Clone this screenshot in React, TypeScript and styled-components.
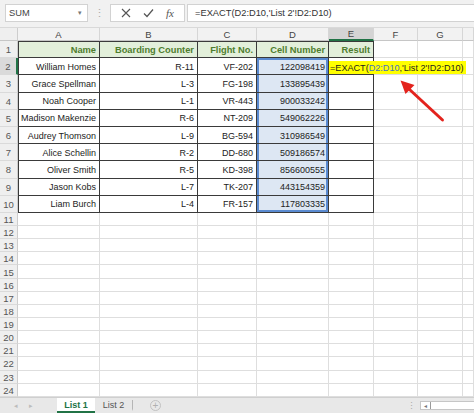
import React from "react";
import styled, { createGlobalStyle } from "styled-components";

const GlobalStyle = createGlobalStyle`
  * { box-sizing: border-box; }
  html, body { margin: 0; padding: 0; background: #fff; }
  body { font-family: "Liberation Sans", Arial, sans-serif; }
`;

// data
const COLS = ["A", "B", "C", "D", "E", "F", "G", "H"];
const HEADERS = ["Name", "Boarding Counter", "Flight No.", "Cell Number", "Result"];
const ROWS = [
  ["William Homes", "R-11", "VF-202", "122098419"],
  ["Grace Spellman", "L-3", "FG-198", "133895439"],
  ["Noah Cooper", "L-1", "VR-443", "900033242"],
  ["Madison Makenzie", "R-6", "NT-209", "549062226"],
  ["Audrey Thomson", "L-9", "BG-594", "310986549"],
  ["Alice Schellin", "R-2", "DD-680", "509186574"],
  ["Oliver Smith", "R-5", "KD-398", "856600555"],
  ["Jason Kobs", "L-7", "TK-207", "443154359"],
  ["Liam Burch", "L-4", "FR-157", "117803335"],
];
const TOTAL_ROWS = 24;

type CellProps = {
  $table?: boolean;
  $head?: boolean;
  $range?: boolean;
  $left?: boolean;
  $top?: boolean;
  $rTop?: boolean;
  $rBottom?: boolean;
};

const DARK = "#3a3a3a";
const BLUE = "#5a8ad0";

const cellShadow = (p: CellProps) => {
  const list: string[] = [];
  if (p.$left) list.push(`inset 1px 0 0 ${DARK}`);
  if (p.$top) list.push(`inset 0 1px 0 ${DARK}`);
  if (p.$range) {
    list.push(`inset 2px 0 0 ${BLUE}`, `inset -2px 0 0 ${BLUE}`);
    if (p.$rTop) list.push(`inset 0 2px 0 ${BLUE}`);
    if (p.$rBottom) list.push(`inset 0 -2px 0 ${BLUE}`);
  }
  return list.length ? list.join(", ") : "none";
};

const App: React.FC = () => {
  const cells: React.ReactNode[] = [];

  cells.push(<Corner key="corner" />);
  COLS.forEach((c) => (
    cells.push(<ColHead key={`h-${c}`} $active={c === "E"}>{c === "H" ? "" : c}</ColHead>)
  ));

  for (let r = 1; r <= TOTAL_ROWS; r++) {
    cells.push(<RowHead key={`r-${r}`} $active={r === 2}>{r}</RowHead>);
    COLS.forEach((c, ci) => {
      const inTable = r <= 10 && ci <= 4;
      const isRange = c === "D" && r >= 2 && r <= 10;
      let content: React.ReactNode = null;
      if (r === 1 && ci <= 4) content = HEADERS[ci];
      if (r >= 2 && r <= 10 && ci <= 3) content = ROWS[r - 2][ci];
      if (r === 2 && c === "E") {
        content = (
          <EditText>
            =EXACT(<RefText>D2:D10</RefText>,'List 2'!D2:D10)
          </EditText>
        );
      }
      cells.push(
        <Cell
          key={`${c}${r}`}
          $table={inTable}
          $head={inTable && r === 1}
          $range={isRange}
          $rTop={r === 2}
          $rBottom={r === 10}
          $left={inTable && ci === 0}
          $top={inTable && r === 1}
        >
          {content}
        </Cell>
      );
    });
  }

  return (
    <>
      <GlobalStyle />
      <Page>
        <FormulaBar>
          <NameBox>
            SUM
            <Caret>▾</Caret>
          </NameBox>
          <Grip>⋮</Grip>
          <ActionBox>
            <svg width="10" height="10" viewBox="0 0 10 10">
              <path d="M1 1 L9 9 M9 1 L1 9" stroke="#555" strokeWidth="1.1" fill="none" />
            </svg>
            <svg width="11" height="10" viewBox="0 0 11 10">
              <path d="M1 5.5 L4 8.5 L10 1.5" stroke="#555" strokeWidth="1.2" fill="none" />
            </svg>
            <Fx>fx</Fx>
          </ActionBox>
          <FormulaInput>=EXACT(D2:D10,'List 2'!D2:D10)</FormulaInput>
        </FormulaBar>

        <Sheet>
          {cells}
          <Arrow width="52" height="48" viewBox="0 0 52 48">
            <line x1="47.5" y1="44" x2="14" y2="13" stroke="#e3231d" strokeWidth="3" strokeLinecap="round" />
            <polygon points="5.5,4.5 19.5,9 10.5,18" fill="#e3231d" />
          </Arrow>
        </Sheet>

        <TabBar>
          <TabNav>
            <span>◂</span>
            <span>▸</span>
          </TabNav>
          <Tab $active>List 1</Tab>
          <Tab>List 2</Tab>
          <AddSheet>+</AddSheet>
          <Spacer />
          <Grip $small>⋮</Grip>
          <ScrollBox>
            <ScrollBtn>◂</ScrollBtn>
          </ScrollBox>
        </TabBar>
      </Page>
    </>
  );
};

export default App;

const Page = styled.div`
  width: 474px;
  height: 413px;
  display: flex;
  flex-direction: column;
  overflow: hidden;
  background: #fff;
`;

// formula bar
const FormulaBar = styled.div`
  height: 28px;
  flex: none;
  display: flex;
  align-items: center;
  padding: 1px 0 2px 5px;
  background: #f1f1f1;
  border-bottom: 1px solid #d9d9d9;
  font-size: 9.3px;
  color: #333;
`;

const NameBox = styled.div`
  width: 83px;
  height: 18px;
  display: flex;
  align-items: center;
  justify-content: space-between;
  padding: 0 5px 0 3px;
  background: #fff;
  border: 1px solid #d2d2d2;
  color: #444;
`;

const Caret = styled.span`
  font-size: 7px;
  color: #777;
`;

const Grip = styled.div<{ $small?: boolean }>`
  width: ${(p) => (p.$small ? "10px" : "22px")};
  text-align: center;
  color: #aaa;
  font-size: ${(p) => (p.$small ? "9px" : "11px")};
  align-self: center;
`;

const ActionBox = styled.div`
  width: 75px;
  height: 18px;
  display: flex;
  align-items: center;
  justify-content: space-around;
  padding: 0 4px;
  background: #fff;
  border: 1px solid #d2d2d2;
`;

const Fx = styled.span`
  font-family: "Liberation Serif", "Times New Roman", serif;
  font-style: italic;
  font-size: 11px;
  color: #555;
`;

const FormulaInput = styled.div`
  flex: 1;
  height: 18px;
  margin-left: 2px;
  display: flex;
  align-items: center;
  padding-left: 7px;
  background: #fff;
  border: 1px solid #d2d2d2;
  border-right: none;
  white-space: nowrap;
`;

// grid
const Sheet = styled.div`
  position: relative;
  flex: 1;
  overflow: hidden;
  display: grid;
  grid-template-columns: 18px 82px 98px 59px 72px 45px 44px 45px 1fr;
  grid-template-rows: 13px repeat(10, 17.2px) repeat(14, 13.15px);
  font-size: 9px;
  color: #222;
`;

const Corner = styled.div`
  position: relative;
  background: #efefef;
  border-right: 1px solid #cdcdcd;
  border-bottom: 1px solid #c6c6c6;

  ::after {
    content: "";
    position: absolute;
    right: 2px;
    bottom: 2px;
    border-left: 7px solid transparent;
    border-bottom: 7px solid #c2c2c2;
  }
`;

const ColHead = styled.div<{ $active?: boolean }>`
  display: flex;
  align-items: center;
  justify-content: center;
  background: ${(p) => (p.$active ? "#d4d4d4" : "#f2f2f2")};
  border-right: 1px solid #d6d6d6;
  border-bottom: ${(p) => (p.$active ? "2px solid #217346" : "1px solid #c6c6c6")};
  color: #444;
  font-size: 9.5px;
`;

const RowHead = styled.div<{ $active?: boolean }>`
  display: flex;
  align-items: center;
  justify-content: center;
  padding-top: 1px;
  background: ${(p) => (p.$active ? "#dadada" : "#efefef")};
  border-right: ${(p) => (p.$active ? "2px solid #217346" : "1px solid #cdcdcd")};
  border-bottom: 1px solid #dadada;
  color: #555;
  font-size: 9.5px;
`;

const Cell = styled.div<CellProps>`
  position: relative;
  display: flex;
  align-items: center;
  justify-content: flex-end;
  padding: 1px 3px 0 2px;
  white-space: nowrap;
  border-right: 1px solid ${(p) => (p.$table ? DARK : "#dedede")};
  border-bottom: 1px solid ${(p) => (p.$table ? DARK : "#dedede")};
  background: ${(p) => (p.$head ? "#e2efda" : p.$range ? "#dde7f3" : "#fff")};
  color: ${(p) => (p.$head ? "#4e7d2e" : "#222")};
  font-weight: ${(p) => (p.$head ? 700 : 400)};
  font-size: ${(p) => (p.$head ? "9.3px" : "9px")};
  box-shadow: ${(p) => cellShadow(p)};
`;

const EditText = styled.span`
  position: absolute;
  z-index: 2;
  left: 0;
  top: 3px;
  bottom: 0;
  display: flex;
  align-items: center;
  padding: 0 2px 0 1px;
  background: #ffff00;
  color: #1c1c1c;
  font-weight: 400;
  font-size: 9.1px;
`;

const RefText = styled.span`
  color: #4472c4;
`;

const Arrow = styled.svg`
  position: absolute;
  left: 395px;
  top: 48px;
  z-index: 3;
  pointer-events: none;
`;

// sheet tabs
const TabBar = styled.div`
  height: 16px;
  flex: none;
  display: flex;
  align-items: stretch;
  background: #e8e8e8;
  border-top: 1px solid #cfcfcf;
  font-size: 9px;
`;

const TabNav = styled.div`
  width: 57px;
  display: flex;
  align-items: center;
  gap: 11px;
  padding-left: 14px;
  color: #bcbcbc;
  font-size: 7px;
`;

const Tab = styled.div<{ $active?: boolean }>`
  width: 38px;
  display: flex;
  align-items: center;
  justify-content: center;
  background: ${(p) => (p.$active ? "#fff" : "transparent")};
  color: ${(p) => (p.$active ? "#217346" : "#555")};
  font-weight: ${(p) => (p.$active ? 700 : 400)};
  border-bottom: 2px solid ${(p) => (p.$active ? "#217346" : "transparent")};
  border-right: ${(p) => (p.$active ? "none" : "1px solid #b5b5b5")};
  margin: ${(p) => (p.$active ? "0" : "2px 0 2px 0")};
  padding-top: ${(p) => (p.$active ? "1px" : "0")};
`;

const AddSheet = styled.div`
  width: 11px;
  height: 11px;
  margin: auto 0 auto 17px;
  display: flex;
  align-items: center;
  justify-content: center;
  border: 1px solid #c2c2c2;
  border-radius: 50%;
  color: #b0b0b0;
  font-size: 10px;
  line-height: 1;
`;

const Spacer = styled.div`
  flex: 1;
`;

const ScrollBox = styled.div`
  width: 54px;
  height: 9px;
  margin: auto 0 auto 4px;
  display: flex;
  background: #fff;
  border: 1px solid #c6c6c6;
  border-right: none;
`;

const ScrollBtn = styled.div`
  width: 10px;
  display: flex;
  align-items: center;
  justify-content: center;
  border-right: 1px solid #9a9a9a;
  color: #777;
  font-size: 6px;
`;
